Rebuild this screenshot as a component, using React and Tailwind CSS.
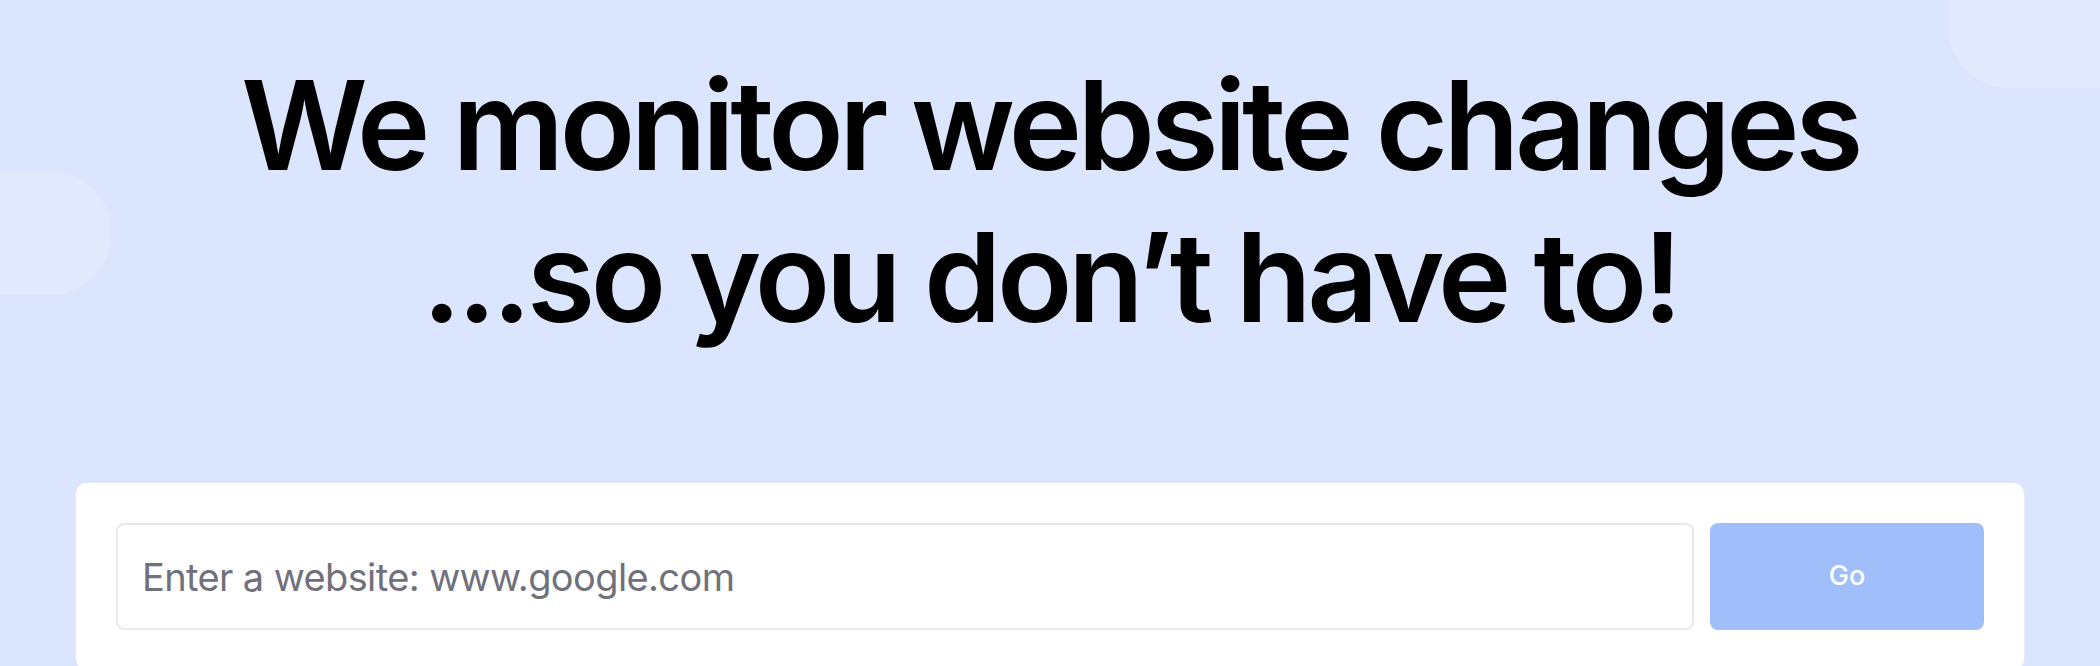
import { useState } from 'react';

const App = () => {
  const [site, setSite] = useState("");

  return (
    <div className="relative min-h-screen overflow-hidden bg-[#dbe5fd] font-['Inter',sans-serif]">
      {/* background blobs */}
      <div className="absolute left-[1949px] top-[-60px] h-[148px] w-[300px] rounded-[60px] bg-[#e3e9fc]" />
      <div className="absolute left-[-200px] top-[172px] h-[123px] w-[311px] rounded-[60px] bg-[#e3e9fc]" />

      <main className="relative">
        <h1 className="pt-[49px] text-center text-[124px] font-semibold leading-[152px] tracking-[-0.036em] text-black">
          We monitor website changes
          <br />
          ...so you don’t have to!
        </h1>

        <section className="mx-[75px] mt-[129px] rounded-xl border border-[#e2e8f4] bg-white p-10">
          <div className="flex gap-4">
            <input
              className="h-[107px] flex-1 rounded-lg border-2 border-[#e5e9f0] px-6 text-[38px] tracking-[-0.016em] text-gray-800 outline-none placeholder:text-[#70717a]"
              placeholder="Enter a website: www.google.com"
              value={site}
              onChange={(e) => setSite(e.target.value)}
            />
            <button className="h-[107px] w-[274px] rounded-lg bg-[#a0bffa] text-[27px] font-medium text-white">
              Go
            </button>
          </div>
        </section>
      </main>
    </div>
  );
};

export default App;
